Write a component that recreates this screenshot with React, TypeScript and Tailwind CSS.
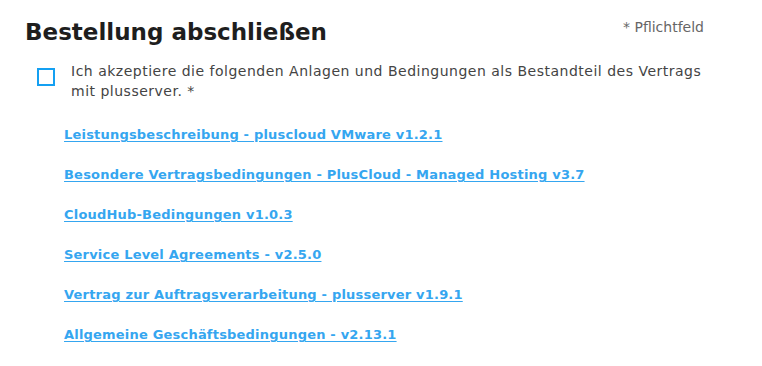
export default function App() {
  const links = [
    "Leistungsbeschreibung - pluscloud VMware v1.2.1",
    "Besondere Vertragsbedingungen - PlusCloud - Managed Hosting v3.7",
    "CloudHub-Bedingungen v1.0.3",
    "Service Level Agreements - v2.5.0",
    "Vertrag zur Auftragsverarbeitung - plusserver v1.9.1",
    "Allgemeine Geschäftsbedingungen - v2.13.1",
  ];

  return (
    <div className="w-[762px] h-[366px] bg-white font-['DejaVu_Sans',sans-serif] overflow-hidden">
      <div className="flex items-start justify-between pl-[25px] pr-[58px] pt-[17px]">
        <h1 className="text-[23px] leading-[31px] font-bold text-[#1e1e1e]">
          Bestellung abschließen
        </h1>
        <span className="text-[14px] leading-[18px] text-[#666] pt-[1px]">* Pflichtfeld</span>
      </div>

      <div className="flex items-start gap-[16px] pl-[37px] pt-[13px]">
        <div className="w-[18px] h-[18px] border-2 border-[#14a0f2] mt-[7px] shrink-0" />
        <p className="w-[660px] text-[14px] leading-[20px] tracking-[0.5px] text-[#444]">
          Ich akzeptiere die folgenden Anlagen und Bedingungen als Bestandteil des Vertrags
          <br />
          mit plusserver. *
        </p>
      </div>

      <ul className="flex flex-col gap-[22px] pl-[64px] pt-[25px]">
        {links.map((l) => (
          <li key={l} className="text-[13px] leading-[18px]">
            <a
              href="#"
              className="font-bold tracking-[0.2px] text-[#35a6f0] underline underline-offset-[2px]"
            >
              {l}
            </a>
          </li>
        ))}
      </ul>
    </div>
  );
}
